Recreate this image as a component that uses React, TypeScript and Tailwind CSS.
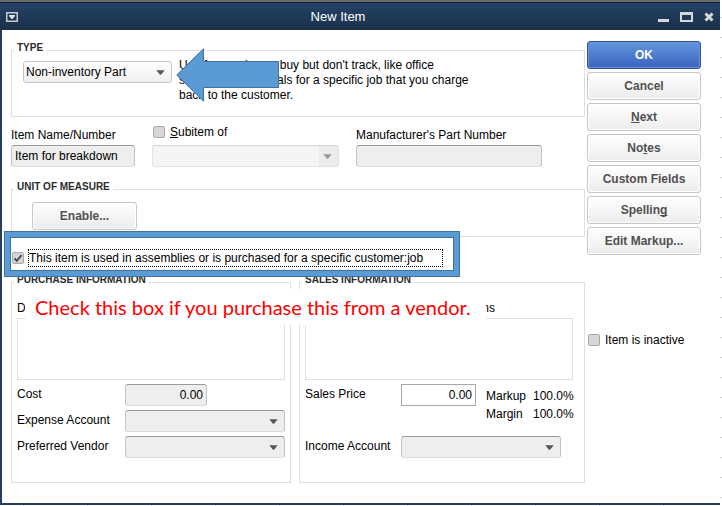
import React, { useState } from 'react';
import clsx from 'clsx';

const Caret = ({ className }: { className?: string }) => (
  <svg viewBox="0 0 9 5" className={clsx('pointer-events-none absolute right-[7px] top-[9px] h-[5px] w-[9px]', className)}>
    <path d="M0.3 0.3H8.7L5 4.7H4Z" fill="currentColor" />
  </svg>
);

const sunken =
  'h-[22px] w-full rounded-[3px] border border-[#c4c4c4] border-t-[#9a9a9a] border-b-[#dcdcdc] bg-[#eeeeee] px-[3px] outline-none';

const Field = ({ id, label, children }: { id: string; label: string; children: React.ReactNode }) => (
  <div className="flex h-[22px] items-center">
    <label htmlFor={id} className="mb-0.5 flex-1 whitespace-nowrap leading-4">
      {label}
    </label>
    {children}
  </div>
);

const DropDown = ({ id }: { id: string }) => (
  <div className="relative w-[160px]">
    <select id={id} className={clsx(sunken, 'block appearance-none')} />
    <Caret className="text-[#555]" />
  </div>
);

type CheckProps = { id: string; checked: boolean; onChange: () => void };

const Check = ({ id, checked, onChange }: CheckProps) => (
  <span className="relative block h-3 w-3 shrink-0">
    <input
      id={id}
      type="checkbox"
      checked={checked}
      onChange={onChange}
      className="block h-3 w-3 appearance-none rounded-[2px] border border-[#a9a9a9] bg-[#d6d6d6]"
    />
    {checked && (
      <svg viewBox="0 0 12 12" className="pointer-events-none absolute inset-0 h-3 w-3">
        <path d="M2.5 6.3L4.8 8.8L9.5 3.2" fill="none" stroke="#444" strokeWidth="1.8" />
      </svg>
    )}
  </span>
);

type GroupProps = { title: string; className?: string; children: React.ReactNode };

const Group = ({ title, className, children }: GroupProps) => (
  <fieldset className={clsx('min-w-0 border border-[#dfdfdf] px-0.5', className)}>
    <legend className="px-[3px] pb-1 text-[10px] font-bold leading-3 text-[#2b2b2b]">{title}</legend>
    {children}
  </fieldset>
);

const plainButton =
  'h-7 rounded-[3px] border border-[#c6c6c6] bg-linear-to-b from-white to-[#ececec] font-bold text-[#505050] shadow-[inset_0_0_0_1px_#fff]';

const actions = [
  { name: 'Cancel', text: 'Cancel' },
  { name: 'Next', text: <><u>N</u>ext</> },
  { name: 'Notes', text: <>No<u>t</u>es</> },
  { name: 'Custom Fields', text: 'Custom Fields' },
  { name: 'Spelling', text: <>Spellin<u>g</u></> },
  { name: 'Edit Markup', text: 'Edit Markup...' },
];

const TitleBar = () => (
  <header className="flex h-[30px] items-center border-t-2 border-[#6b6b6b] bg-linear-to-b from-[#234468] to-[#1a3049] pl-1.5 pr-1.5 pt-0.5 shadow-[inset_0_1px_0_#14202e]">
    <button aria-label="Window menu" className="w-4">
      <svg viewBox="0 0 12 10" className="h-[10px] w-3">
        <rect x="0.75" y="0.75" width="10.5" height="8.5" fill="none" stroke="#c8ccd0" strokeWidth="1.5" />
        <path d="M3 3H9V4L6.5 7H5.5L3 4Z" fill="#dfe3e6" />
      </svg>
    </button>
    <h1 className="flex-1 text-center text-[13px] leading-4 text-white">New Item</h1>
    <div className="flex w-[60px] justify-end gap-[11px]">
      <button aria-label="Minimize">
        <svg viewBox="0 0 11 10" className="h-[10px] w-[11px]">
          <path d="M0 7H11V10H0Z" fill="#d8d8d8" />
        </svg>
      </button>
      <button aria-label="Maximize">
        <svg viewBox="0 0 13 10" className="h-[10px] w-[13px]">
          <path d="M0 0H13V10H0ZM2 3V8H11V3Z" fill="#d8d8d8" fillRule="evenodd" />
        </svg>
      </button>
      <button aria-label="Close">
        <svg viewBox="0 0 10 10" className="h-[10px] w-[10px]">
          <path d="M1.5 1.5L8.5 8.5M8.5 1.5L1.5 8.5" stroke="#d8d8d8" strokeWidth="3" />
        </svg>
      </button>
    </div>
  </header>
);

const App = () => {
  const [subitem, setSubitem] = useState(false);
  const [assembly, setAssembly] = useState(true);
  const [inactive, setInactive] = useState(false);

  return (
    <div className="min-h-screen bg-[repeating-linear-gradient(to_bottom,transparent_0_17px,#d4d4d4_17px_18px,transparent_18px_20px)] pr-0.5 font-['Liberation_Sans',Arial,sans-serif] text-[12px] text-black [text-decoration-skip-ink:none]">
      <div className="bg-[repeating-linear-gradient(to_right,#fff_0_23px,#c9d3e3_23px_24px,#fff_24px_64px)] pb-px">
        <TitleBar />
        <div className="flex items-start gap-0.5 border-b-2 border-l-2 border-[#213f60] bg-white pb-5 pl-[9px] pr-[19px]">
          <main className="min-w-0 flex-1 pt-3">
            <Group title="TYPE" className="relative pb-[13px]">
              <div className="flex gap-[7px] pl-[9px]">
                <div className="relative mt-[3px] h-[22px] w-[149px] shrink-0">
                  <select
                    aria-label="Type"
                    className="block h-[22px] w-full appearance-none rounded-[3px] border border-[#c4c4c4] bg-linear-to-b from-white to-[#efefef] px-0.5 outline-none"
                  >
                    <option>Non-inventory Part</option>
                  </select>
                  <Caret className="text-[#555]" />
                </div>
                <p className="whitespace-nowrap leading-[15px]">
                  Use for goods you buy but don't track, like office
                  <br />
                  supplies, or materials for a specific job that you charge
                  <br />
                  back to the customer.
                </p>
              </div>
              <svg viewBox="0 0 103 54" className="absolute left-[164px] -top-2.5 h-[54px] w-[103px]">
                <path
                  d="M0.7 27L27.5 0.8V13.5H102.5V39.5H27.5V53.2Z"
                  fill="#5b9bd5"
                  stroke="#41719c"
                />
              </svg>
            </Group>

            <div className="mt-[7px] flex items-end gap-[17px]">
              <div className="w-[124px]">
                <label htmlFor="name" className="mb-0.5 block leading-4">Item Name/Number</label>
                <input id="name" defaultValue="Item for breakdown" className={clsx(sunken, 'block')} />
              </div>
              <div className="w-[187px]">
                <div className="mb-[5px] flex items-center gap-[5px] pl-px">
                  <Check id="subitem" checked={subitem} onChange={() => setSubitem(!subitem)} />
                  <label htmlFor="subitem" className="leading-4"><u>S</u>ubitem of</label>
                </div>
                <div className="relative">
                  <select
                    aria-label="Parent item"
                    disabled
                    className="block h-[22px] w-full appearance-none rounded-[3px] border border-[#e2e2e2] border-t-[#d2d2d2] bg-[linear-gradient(to_left,#ececec_19px,#f5f5f5_19px)]"
                  />
                  <Caret className="text-[#999]" />
                </div>
              </div>
              <div className="w-[186px]">
                <label htmlFor="part" className="mb-0.5 block leading-4">Manufacturer's Part Number</label>
                <input id="part" className={clsx(sunken, 'block')} />
              </div>
            </div>

            <Group title="UNIT OF MEASURE" className="mt-3.5 pb-1.5 pt-0">
              <button className={clsx(plainButton, 'ml-[18px] mt-[5px] block w-[105px]')}>Enable...</button>
            </Group>

            <div className="relative z-10 mt-3 flex">
              <div className="absolute -left-[7px] -top-[18px] h-[46px] w-[456px] border border-[#41719c] bg-[#5b9bd5] p-[5px]">
                <div className="h-full border border-[#41719c] bg-white" />
              </div>
              <div className="relative flex h-[18px] items-center gap-1 pl-px">
                <Check id="assembly" checked={assembly} onChange={() => setAssembly(!assembly)} />
                <label
                  htmlFor="assembly"
                  className="w-[415px] whitespace-nowrap border border-dotted border-black leading-4"
                >
                  This item is used in assemblies or is purchased for a specific customer:job
                </label>
              </div>
            </div>

            <div className="relative mt-[7px] flex gap-2">
              <Group title="PURCHASE INFORMATION" className="w-[280px] pb-6">
                <div className="flex flex-col gap-1 px-[3px] pt-[10px]">
                  <div>
                    <label htmlFor="purchase" className="mb-0.5 block leading-4">
                      Description on Purchase Transactions
                    </label>
                    <textarea id="purchase" className="block h-[62px] w-full resize-none border border-[#dfdfdf]" />
                  </div>
                  <Field id="cost" label="Cost">
                    <div className="w-[160px]">
                      <input id="cost" defaultValue="0.00" className={clsx(sunken, 'block max-w-[82px] text-right')} />
                    </div>
                  </Field>
                  <Field id="expense" label="Expense Account"><DropDown id="expense" /></Field>
                  <Field id="vendor" label="Preferred Vendor"><DropDown id="vendor" /></Field>
                </div>
              </Group>

              <Group title="SALES INFORMATION" className="flex-1 pb-6">
                <div className="flex flex-col gap-1 px-[3px] pt-[10px]">
                  <div className="pr-1.5">
                    <label htmlFor="sales" className="mb-0.5 flex w-[190px] justify-between leading-4">
                      <span>Description on Sales</span> <span>Transactions</span>
                    </label>
                    <textarea id="sales" className="block h-[62px] w-full resize-none border border-[#dfdfdf]" />
                  </div>
                  <div className="flex h-12 items-start">
                    <label htmlFor="price" className="flex-1 pt-0.5 leading-4">Sales Price</label>
                    <input
                      id="price"
                      defaultValue="0.00"
                      className="h-[22px] w-[75px] border border-[#a8a8a8] bg-white px-[3px] text-right outline-none"
                    />
                    <dl className="ml-[10px] grid w-[93px] grid-cols-[47px_1fr] pt-[3px] leading-[18px]">
                      <dt>Markup</dt>
                      <dd>100.0%</dd>
                      <dt>Margin</dt>
                      <dd>100.0%</dd>
                    </dl>
                  </div>
                  <div className="pr-[18px]">
                    <Field id="income" label="Income Account"><DropDown id="income" /></Field>
                  </div>
                </div>
              </Group>

              <p className="absolute left-[14px] top-[15px] h-9 w-[461px] whitespace-nowrap bg-white pl-[10px] font-['Lato','Noto_Sans',sans-serif] text-[20px] leading-9 text-[#ff0000]">
                Check this box if you purchase this from a vendor.
              </p>
            </div>
          </main>

          <aside className="flex w-[114px] shrink-0 flex-col gap-[3px] pt-[11px]">
            <button className="h-7 rounded-[3px] border border-[#2f529b] bg-linear-to-b from-[#6496dc] to-[#3b63c0] font-bold text-white shadow-[inset_0_0_0_1px_#6b93da]">
              OK
            </button>
            {actions.map((action) => (
              <button key={action.name} className={plainButton}>{action.text}</button>
            ))}
            <div className="mt-[74px] flex items-center gap-[5px] pl-px">
              <Check id="inactive" checked={inactive} onChange={() => setInactive(!inactive)} />
              <label htmlFor="inactive" className="leading-4">Item is inactive</label>
            </div>
          </aside>
        </div>
      </div>
    </div>
  );
};

export default App;
